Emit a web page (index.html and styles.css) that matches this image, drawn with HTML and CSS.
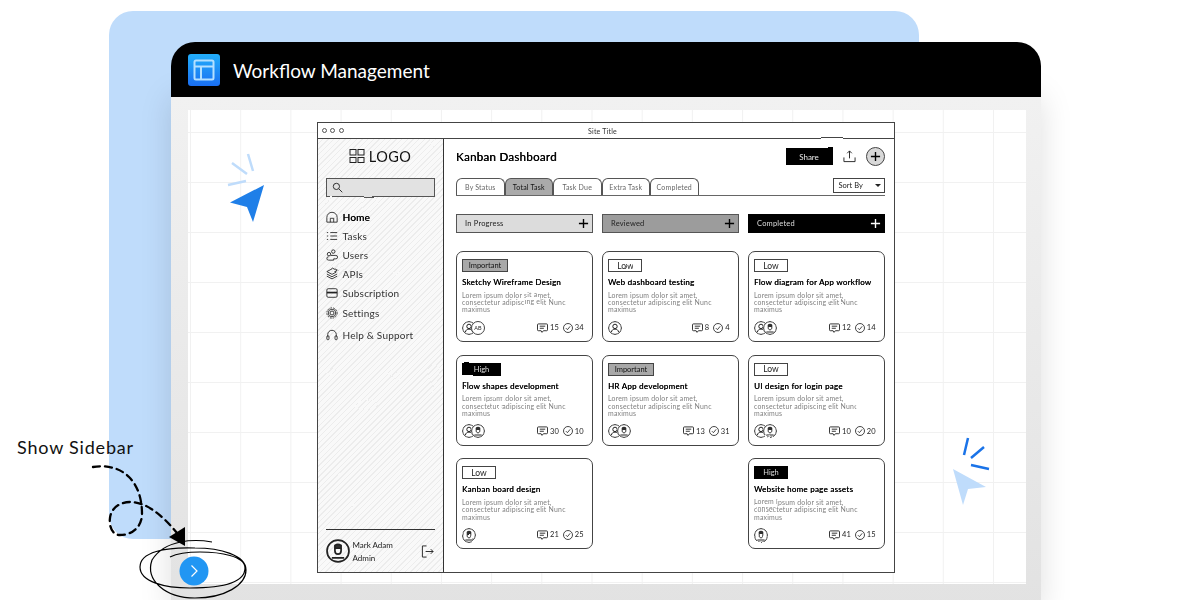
FILE: index.html
```html
<!DOCTYPE html>
<html lang="en">
<head>
    <meta charset="UTF-8">
    <meta name="viewport" content="width=device-width, initial-scale=1.0">
    <title>Workflow Management</title>
    <link rel="stylesheet" href="styles.css">
</head>
<body>
    <svg class="defs" width="0" height="0">
        <defs>
            <filter id="sketch" x="-2%" y="-2%" width="104%" height="104%" color-interpolation-filters="sRGB">
                <feGaussianBlur in="SourceGraphic" stdDeviation="0.42" result="soft"/>
                <feTurbulence type="fractalNoise" baseFrequency="0.03" numOctaves="1" seed="4" result="noise"/>
                <feColorMatrix in="noise" type="matrix" values="1 0 0 0 0  0 1 0 0 0  0 0 1 0 0  0 0 0 0 1" result="opaque"/>
                <feDisplacementMap in="soft" in2="opaque" scale="2" xChannelSelector="R" yChannelSelector="G"/>
            </filter>
            <symbol id="i-user" viewBox="0 0 14 14">
                <circle cx="7" cy="7" r="6.4"/><circle cx="7" cy="5.4" r="2.2"/><path d="M3.4 11c.4-2 1.800-2.900 3.600-2.900s3.200.9 3.600 2.900"/>
            </symbol>
            <symbol id="i-face" viewBox="0 0 14 14">
                <circle cx="7" cy="7" r="6.4"/><path class="solid" d="M5.200 5.400V3.800q1.800-1.200 3.600 0v1.600z"/><path d="M5.200 5.400v1.400c0 1.200.8 2 1.800 2s1.800-.8 1.800-2V5.400M3.400 11h7.200"/>
            </symbol>
            <symbol id="i-comment" viewBox="0 0 12 11">
                <path d="M1.500 1h9q1 0 1 1v5.500q0 1-1 1H7l-1.500 1.800L4.500 8.500h-3q-1 0-1-1V2q0-1 1-1z"/><path d="M3 3.500h6M3 5.800h4.500"/>
            </symbol>
            <symbol id="i-check" viewBox="0 0 12 12">
                <circle cx="6" cy="6" r="5.400"/><path d="M3.500 6.200l1.800 1.800 3.300-4"/>
            </symbol>
            <symbol id="i-plus" viewBox="0 0 12 12">
                <path d="M6 1v10M1 6h10"/>
            </symbol>
        </defs>
    </svg>

    <div class="backdrop"></div>

    <div class="window">
        <div class="title-bar">
            <span class="app-icon">
                <svg viewBox="0 0 32 32" width="32" height="32">
                    <rect x="6.500" y="6.500" width="19" height="19" rx="1.500"/>
                    <path d="M6.500 12.500h19M13 12.500v13"/>
                </svg>
            </span>
            <span class="app-name">Workflow Management</span>
        </div>
        <div class="window-body">
            <div class="canvas">
                <div class="wire">
                    <div class="wire-top">
                        <span class="dots"><i></i><i></i><i></i></span>
                        <span class="site-title">Site Title</span>
                    </div>
                    <div class="wire-main">
                        <aside class="sidebar">
                            <div class="logo">
                                <svg class="ico" viewBox="0 0 16 16" width="16" height="16">
                                    <rect x="1" y="1.500" width="6" height="5.500"/><rect x="9" y="1.500" width="6" height="5.500"/><rect x="1" y="9.500" width="6" height="5"/><rect x="9" y="9.500" width="6" height="5"/>
                                </svg>
                                <span>LOGO</span>
                            </div>
                            <div class="search">
                                <svg class="ico" viewBox="0 0 12 12" width="11" height="11"><circle cx="4.800" cy="4.800" r="3.400"/><path d="M7.400 7.400l3.800 3.800"/></svg>
                            </div>
                            <nav class="nav">
                                <a class="nav-item active"><svg class="ico" viewBox="0 0 14 14" width="12" height="12"><path d="M1 7.500a6 6 0 0 1 12 0V13H1z"/><path d="M5 13V8.500h4V13"/></svg>Home</a>
                                <a class="nav-item"><svg class="ico" viewBox="0 0 14 14" width="12" height="12"><path d="M1 3h1.500M1 7h1.500M1 11h1.500M5 3h8M5 7h8M5 11h8"/></svg>Tasks</a>
                                <a class="nav-item"><svg class="ico" viewBox="0 0 14 14" width="12" height="12"><circle cx="8.500" cy="3" r="2"/><circle cx="3.500" cy="6" r="2"/><path d="M5.500 7.500h6q2 0 2 2t-2 2H9v1.500H3Q1 13 1 11t2-2"/></svg>Users</a>
                                <a class="nav-item"><svg class="ico" viewBox="0 0 14 14" width="12" height="12"><path d="M7 1l6 3.200-6 3.200-6-3.200z"/><path d="M1 7l6 3.200L13 7M1 9.500l6 3.200 6-3.200"/></svg>APIs</a>
                                <a class="nav-item"><svg class="ico" viewBox="0 0 14 14" width="12" height="12"><rect x="1" y="2" width="12" height="10" rx="1.500"/><path class="thick" d="M1 6.500h12"/></svg>Subscription</a>
                                <a class="nav-item"><svg class="ico" viewBox="0 0 14 14" width="12" height="12"><circle cx="7" cy="7" r="2.300"/><circle cx="7" cy="7" r="4.400"/><circle cx="7" cy="7" r="6" stroke-dasharray="2 1.200"/></svg>Settings</a>
                                <a class="nav-item last"><svg class="ico" viewBox="0 0 14 14" width="12" height="12"><path d="M2 9V6.500a5 5 0 0 1 10 0V9"/><rect x="1" y="8" width="2.500" height="4.500" rx="1"/><rect x="10.500" y="8" width="2.500" height="4.500" rx="1"/></svg>Help &amp; Support</a>
                            </nav>
                            <div class="profile">
                                <svg class="ico profile-pic" viewBox="0 0 14 14" width="24" height="24"><use href="#i-face"/></svg>
                                <div class="profile-text">
                                    <span>Mark Adam</span>
                                    <span>Admin</span>
                                </div>
                                <svg class="ico logout" viewBox="0 0 14 14" width="13" height="13"><path d="M6 1H1.500v12H6M5 7h8M10.500 4.500L13 7l-2.500 2.500"/></svg>
                            </div>
                        </aside>

                        <main class="content">
                            <div class="head">
                                <h1 class="page-title">Kanban Dashboard</h1>
                                <button class="share">Share</button>
                                <svg class="ico upload" viewBox="0 0 14 14" width="13" height="13"><path d="M7 9V1M4.500 3.500L7 1l2.500 2.500M1 8v4.500h12V8"/></svg>
                                <span class="add-circle"><svg class="ico" width="11" height="11"><use href="#i-plus"/></svg></span>
                            </div>
                            <div class="tabs">
                                <span class="tab">By Status</span>
                                <span class="tab on">Total Task</span>
                                <span class="tab">Task Due</span>
                                <span class="tab">Extra Task</span>
                                <span class="tab">Completed</span>
                                <span class="sort">Sort By<b></b></span>
                            </div>
                            <div class="board">
                                <section class="col">
                                    <div class="col-head light">In Progress<svg class="ico" width="11" height="11"><use href="#i-plus"/></svg></div>
                                    <article class="card">
                                        <span class="tag important">Important</span>
                                        <h3>Sketchy Wireframe Design</h3>
                                        <p>Lorem ipsum dolor sit amet, consectetur adipiscing elit Nunc maximus</p>
                                        <div class="card-foot">
                                            <span class="people"><svg class="ico"><use href="#i-user"/></svg><span class="initials">AB</span></span>
                                            <span class="stat"><svg class="ico c"><use href="#i-comment"/></svg>15</span>
                                            <span class="stat"><svg class="ico k"><use href="#i-check"/></svg>34</span>
                                        </div>
                                    </article>
                                    <article class="card">
                                        <span class="tag high">High</span>
                                        <h3>Flow shapes development</h3>
                                        <p>Lorem ipsum dolor sit amet, consectetur adipiscing elit Nunc maximus</p>
                                        <div class="card-foot">
                                            <span class="people"><svg class="ico"><use href="#i-user"/></svg><svg class="ico"><use href="#i-face"/></svg></span>
                                            <span class="stat"><svg class="ico c"><use href="#i-comment"/></svg>30</span>
                                            <span class="stat"><svg class="ico k"><use href="#i-check"/></svg>10</span>
                                        </div>
                                    </article>
                                    <article class="card">
                                        <span class="tag low">Low</span>
                                        <h3>Kanban board design</h3>
                                        <p>Lorem ipsum dolor sit amet, consectetur adipiscing elit Nunc maximus</p>
                                        <div class="card-foot">
                                            <span class="people"><svg class="ico"><use href="#i-face"/></svg></span>
                                            <span class="stat"><svg class="ico c"><use href="#i-comment"/></svg>21</span>
                                            <span class="stat"><svg class="ico k"><use href="#i-check"/></svg>25</span>
                                        </div>
                                    </article>
                                </section>
                                <section class="col">
                                    <div class="col-head mid">Reviewed<svg class="ico" width="11" height="11"><use href="#i-plus"/></svg></div>
                                    <article class="card">
                                        <span class="tag low">Low</span>
                                        <h3>Web dashboard testing</h3>
                                        <p>Lorem ipsum dolor sit amet, consectetur adipiscing elit Nunc maximus</p>
                                        <div class="card-foot">
                                            <span class="people"><svg class="ico"><use href="#i-user"/></svg></span>
                                            <span class="stat"><svg class="ico c"><use href="#i-comment"/></svg>8</span>
                                            <span class="stat"><svg class="ico k"><use href="#i-check"/></svg>4</span>
                                        </div>
                                    </article>
                                    <article class="card">
                                        <span class="tag important">Important</span>
                                        <h3>HR App development</h3>
                                        <p>Lorem ipsum dolor sit amet, consectetur adipiscing elit Nunc maximus</p>
                                        <div class="card-foot">
                                            <span class="people"><svg class="ico"><use href="#i-user"/></svg><svg class="ico"><use href="#i-face"/></svg></span>
                                            <span class="stat"><svg class="ico c"><use href="#i-comment"/></svg>13</span>
                                            <span class="stat"><svg class="ico k"><use href="#i-check"/></svg>31</span>
                                        </div>
                                    </article>
                                </section>
                                <section class="col">
                                    <div class="col-head dark">Completed<svg class="ico" width="11" height="11"><use href="#i-plus"/></svg></div>
                                    <article class="card">
                                        <span class="tag low">Low</span>
                                        <h3>Flow diagram for App workflow</h3>
                                        <p>Lorem ipsum dolor sit amet, consectetur adipiscing elit Nunc maximus</p>
                                        <div class="card-foot">
                                            <span class="people"><svg class="ico"><use href="#i-user"/></svg><svg class="ico"><use href="#i-face"/></svg></span>
                                            <span class="stat"><svg class="ico c"><use href="#i-comment"/></svg>12</span>
                                            <span class="stat"><svg class="ico k"><use href="#i-check"/></svg>14</span>
                                        </div>
                                    </article>
                                    <article class="card">
                                        <span class="tag low">Low</span>
                                        <h3>UI design for login page</h3>
                                        <p>Lorem ipsum dolor sit amet, consectetur adipiscing elit Nunc maximus</p>
                                        <div class="card-foot">
                                            <span class="people"><svg class="ico"><use href="#i-user"/></svg><svg class="ico"><use href="#i-face"/></svg></span>
                                            <span class="stat"><svg class="ico c"><use href="#i-comment"/></svg>10</span>
                                            <span class="stat"><svg class="ico k"><use href="#i-check"/></svg>20</span>
                                        </div>
                                    </article>
                                    <article class="card">
                                        <span class="tag high wide">High</span>
                                        <h3>Website home page assets</h3>
                                        <p>Lorem ipsum dolor sit amet, consectetur adipiscing elit Nunc maximus</p>
                                        <div class="card-foot">
                                            <span class="people"><svg class="ico"><use href="#i-face"/></svg></span>
                                            <span class="stat"><svg class="ico c"><use href="#i-comment"/></svg>41</span>
                                            <span class="stat"><svg class="ico k"><use href="#i-check"/></svg>15</span>
                                        </div>
                                    </article>
                                </section>
                            </div>
                        </main>
                    </div>
                </div>
            </div>
        </div>
    </div>

    <!-- cursors, scribble and the button sit over the window -->
    <svg class="overlay" viewBox="0 0 1200 600" width="1200" height="600">
        <path class="ray-light" d="M232 163l15 11M248 154l5 17M228 185l18-4"/>
        <path fill="#1f7fe8" d="M264 185L230 202.500 247 207 253 222z"/>
        <path class="ray-blue" d="M968 438l-4 17M984 447l-13 11M971 465l18 4"/>
        <path fill="#bfdcfb" d="M953 469l33 18-18 2-5 16z"/>
        <path class="dashed" d="M93 467c12-2 26 0 36 10 9 9 13 22 13 37 0 12-9 21-22 21-9 0-11-11-10-17 1-10 10-16 20-16 17 0 33 14 47 31"/>
        <path fill="#000" d="M185 527l-16 10 16 9z"/>
        <path class="scribble" d="M212 542C195 539 165 539 152 560C145 580 165 598 195 598C225 598 246 585 246 570C246 555 220 548 195 548C165 547 140 552 140 567C140 582 165 588 190 588C220 588 245 583 245 568C245 556 220 552 200 552C190 552 178 553 170 557"/>
        <circle cx="194" cy="571" r="14.500" fill="#2196f3"/>
        <path class="chevron" d="M191.500 565.500l5.500 5.500-5.500 5.500"/>
    </svg>
    <div class="hint">Show Sidebar</div>
</body>
</html>
```

FILE: styles.css
```css
html, body {
    margin: 0;
    height: 600px;
    overflow: hidden;
    background-color: #ffffff;
}
body {
    position: relative;
    font-family: Lato, sans-serif;
}
.defs {
    position: absolute;
}
.backdrop {
    position: absolute;
    left: 109px;
    top: 11px;
    width: 810px;
    height: 528px;
    background-color: #bfdcfb;
    border-radius: 24px;
}
.window {
    position: relative;
    width: 870px;
    margin-left: 171px;
    padding-top: 42px;
}
.title-bar {
    display: flex;
    align-items: center;
    gap: 13px;
    height: 55px;
    padding-left: 17px;
    background-color: #000000;
    border-radius: 24px 24px 0 0;
}
.app-icon {
    display: block;
    width: 32px;
    height: 32px;
    border-radius: 3px;
    background: linear-gradient(180deg, #22aefa, #1a6ff2);
}
.app-icon svg {
    display: block;
    fill: none;
    stroke: #b4e0ff;
    stroke-width: 2;
}
.app-name {
    padding-top: 1px;
    color: #ffffff;
    font-size: 19px;
}
.window-body {
    height: 503px;
    padding: 13px 15px 0 17px;
    background: linear-gradient(180deg, #f1f1f1, #e2e2e2);
    box-shadow: 0 0 30px rgba(0, 0, 0, 0.13);
}
.canvas {
    height: 474px;
    padding-top: 12px;
    box-sizing: border-box;
    padding-left: 128.500px;
    background-color: #ffffff;
    background-image:
        linear-gradient(#f1f1f1 1px, transparent 1px),
        linear-gradient(90deg, #f1f1f1 1px, transparent 1px);
    background-size: 50.200px 50px;
    background-position: 2px 22px;
}

/* the wireframe */
.wire {
    width: 578px;
    height: 451px;
    box-sizing: border-box;
    display: flex;
    flex-direction: column;
    border: 1px solid #444444;
    background-color: #ffffff;
    color: #222222;
    filter: url(#sketch);
}
.ico {
    fill: none;
    stroke: #222222;
    stroke-width: 1;
    flex: none;
}
.solid {
    fill: #333333;
}
.thick {
    stroke-width: 2;
}
.wire-top {
    display: flex;
    align-items: center;
    height: 15px;
    flex: none;
    border-bottom: 1px solid #444444;
    position: relative;
}
.dots {
    display: flex;
    gap: 3.500px;
    padding-left: 4px;
}
.dots i {
    width: 5px;
    height: 5px;
    box-sizing: border-box;
    border: 1px solid #555555;
    border-radius: 50%;
}
.site-title {
    flex: 1;
    text-align: center;
    font-size: 7px;
    letter-spacing: 0.2px;
    padding-right: 32px;
    color: #333333;
}
.wire-main {
    flex: 1;
    display: flex;
    min-height: 0;
}
.sidebar {
    width: 126px;
    flex: none;
    box-sizing: border-box;
    padding: 8px 8px 0;
    display: flex;
    flex-direction: column;
    border-right: 1px solid #333333;
    background-color: #f9f9f9;
    background-image: repeating-linear-gradient(135deg, transparent 0 3px, rgba(0, 0, 0, 0.05) 3px 4px);
}
.logo {
    display: flex;
    align-items: center;
    justify-content: center;
    gap: 4px;
    height: 20px;
    margin-top: -1px;
    font-size: 14.500px;
    letter-spacing: 0.4px;
    color: #111111;
}
.search {
    display: flex;
    align-items: center;
    height: 19px;
    margin-top: 12px;
    padding-left: 5px;
    box-sizing: border-box;
    border: 1px solid #555555;
    background-color: #e2e2e2;
}
.nav {
    display: flex;
    flex-direction: column;
    margin-top: 10px;
}
.nav-item {
    display: flex;
    align-items: center;
    gap: 5px;
    height: 19.200px;
    font-size: 10px;
    letter-spacing: 0.2px;
    color: #333333;
}
.nav-item.active {
    color: #000000;
    text-shadow: 0.3px 0 0 #000000;
}
.nav-item.last {
    margin-top: 3px;
}
.profile {
    margin-top: auto;
    height: 43px;
    box-sizing: border-box;
    display: flex;
    align-items: center;
    gap: 3px;
    border-top: 1px solid #333333;
}
.profile-text {
    flex: 1;
    display: flex;
    flex-direction: column;
    gap: 3px;
    font-size: 8px;
    color: #222222;
}
.logout {
    margin-right: 1px;
}
.content {
    flex: 1;
    padding: 9px 9px 0 12.500px;
    min-width: 0;
}
.head {
    display: flex;
    align-items: center;
    height: 17px;
}
.page-title {
    flex: 1;
    margin: 0;
    font-size: 11.500px;
    font-weight: normal;
    letter-spacing: 0.3px;
    color: #000000;
    text-shadow: 0.3px 0 0 #000000;
}
.share {
    width: 47px;
    height: 17px;
    padding: 0;
    border: none;
    background-color: #000000;
    color: #e8e8e8;
    font: 8px Lato, sans-serif;
}
.upload {
    margin-left: 10px;
}
.add-circle {
    display: flex;
    align-items: center;
    justify-content: center;
    width: 19px;
    height: 19px;
    margin-left: 10px;
    border-radius: 50%;
    box-sizing: border-box;
    border: 1px solid #444444;
    background-color: #d8d8d8;
}
.add-circle .ico {
    stroke: #000000;
    stroke-width: 1.500;
}
.tabs {
    display: flex;
    align-items: flex-end;
    height: 18px;
    margin-top: 12px;
    border-bottom: 1.500px solid #666666;
}
.tab {
    width: 48.500px;
    height: 17px;
    box-sizing: border-box;
    display: flex;
    align-items: center;
    justify-content: center;
    border: 1px solid #555555;
    border-bottom: none;
    border-radius: 6px 6px 0 0;
    font-size: 7px;
    color: #666666;
    letter-spacing: 0.2px;
}
.tab.on {
    background-color: #aaaaaa;
    color: #111111;
}
.sort {
    margin-left: auto;
    width: 52px;
    height: 15px;
    align-self: flex-start;
    margin-top: 1px;
    box-sizing: border-box;
    display: flex;
    align-items: center;
    justify-content: space-between;
    padding: 0 3px 0 5px;
    border: 1px solid #444444;
    font-size: 7.500px;
    color: #222222;
}
.sort b {
    width: 0;
    height: 0;
    border-left: 3px solid transparent;
    border-right: 3px solid transparent;
    border-top: 3px solid #222222;
}
.board {
    display: grid;
    grid-template-columns: repeat(3, 1fr);
    gap: 9.500px;
    margin-top: 18px;
}
.col {
    display: flex;
    flex-direction: column;
    gap: 12.600px;
}
.col-head {
    display: flex;
    align-items: center;
    justify-content: space-between;
    height: 19px;
    margin-bottom: 5.500px;
    padding: 0 3px 0 8px;
    box-sizing: border-box;
    border: 1px solid #555555;
    font-size: 7.500px;
    letter-spacing: 0.2px;
}
.col-head .ico {
    stroke: #000000;
    stroke-width: 1.500;
}
.col-head.light {
    background-color: #dcdcdc;
}
.col-head.mid {
    background-color: #9c9c9c;
}
.col-head.dark {
    background-color: #000000;
    border-color: #000000;
    color: #dddddd;
}
.col-head.dark .ico {
    stroke: #ffffff;
}
.card {
    height: 91px;
    box-sizing: border-box;
    padding: 7px 4px 0 5px;
    display: flex;
    flex-direction: column;
    align-items: flex-start;
    border: 1px solid #444444;
    border-radius: 7px;
    background-color: #ffffff;
}
.tag {
    width: 46px;
    height: 13px;
    box-sizing: border-box;
    display: flex;
    align-items: center;
    justify-content: center;
    border: 1px solid #444444;
    font-size: 7.500px;
}
.tag.low {
    width: 34px;
    font-size: 8.500px;
}
.tag.important {
    background-color: #a8a8a8;
    color: #111111;
}
.tag.high {
    width: 39px;
    background-color: #000000;
    border-color: #000000;
    color: #dddddd;
}
.tag.high.wide {
    width: 34px;
}
.card h3 {
    margin: 5px 0 0;
    font-size: 8px;
    font-weight: normal;
    line-height: 11px;
    white-space: nowrap;
    color: #000000;
    letter-spacing: 0.25px;
    text-shadow: 0.2px 0 0 #000000;
}
.card p {
    margin: 3.500px 0 0;
    font-size: 6.900px;
    line-height: 7.400px;
    color: #808080;
    letter-spacing: 0.23px;
    height: 22px;
}
.card-foot {
    width: 100%;
    display: flex;
    align-items: center;
    gap: 4px;
    margin-top: 7px;
    padding-right: 4px;
    box-sizing: border-box;
    font-size: 7.500px;
    color: #222222;
}
.people {
    flex: 1;
    display: flex;
    align-items: center;
}
.people .ico,
.initials {
    width: 14px;
    height: 14px;
    margin-right: -5px;
    background-color: #ffffff;
    border-radius: 50%;
}
.initials {
    display: flex;
    align-items: center;
    justify-content: center;
    box-sizing: border-box;
    border: 1px solid #444444;
    font-size: 5.500px;
    position: relative;
}
.stat {
    display: flex;
    align-items: center;
    gap: 2px;
}
.stat .c {
    width: 11px;
    height: 10px;
}
.stat .k {
    width: 10px;
    height: 10px;
}

/* things on top of the window */
.overlay {
    position: absolute;
    left: 0;
    top: 0;
    fill: none;
}
.ray-light,
.ray-blue {
    stroke-width: 2.500;
}
.ray-light {
    stroke: #bfdcfb;
}
.ray-blue {
    stroke: #1a73e8;
}
.dashed {
    stroke: #000000;
    stroke-width: 2.300;
    stroke-dasharray: 7 5;
    stroke-linecap: round;
}
.scribble {
    stroke: #000000;
    stroke-width: 1.200;
}
.chevron {
    stroke: #ffffff;
    stroke-width: 1.200;
}
.hint {
    position: absolute;
    left: 17px;
    top: 437px;
    font-size: 18px;
    line-height: 20px;
    color: #111111;
    letter-spacing: 0.8px;
}
```
